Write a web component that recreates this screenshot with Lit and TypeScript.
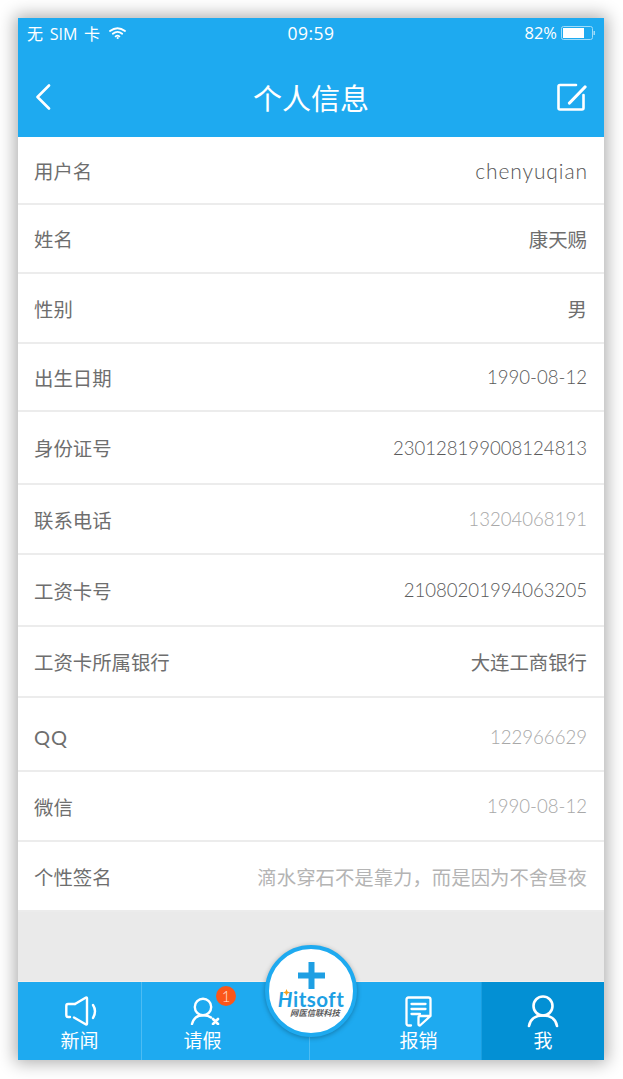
import { LitElement, html, css } from "lit";
import { customElement } from "lit/decorators.js";

type Row = { k: string; v: string; kind: "cjk" | "num" | "lat"; muted?: boolean; h: number };
const rows: Row[] = [
  { k: "用户名", v: "chenyuqian", kind: "lat", h: 68 },
  { k: "姓名", v: "康天赐", kind: "cjk", h: 69 },
  { k: "性别", v: "男", kind: "cjk", h: 70 },
  { k: "出生日期", v: "1990-08-12", kind: "num", h: 68 },
  { k: "身份证号", v: "230128199008124813", kind: "num", h: 73 },
  { k: "联系电话", v: "13204068191", kind: "num", muted: true, h: 70 },
  { k: "工资卡号", v: "21080201994063205", kind: "num", h: 72 },
  { k: "工资卡所属银行", v: "大连工商银行", kind: "cjk", h: 71 },
  { k: "QQ", v: "122966629", kind: "num", muted: true, h: 74 },
  { k: "微信", v: "1990-08-12", kind: "num", muted: true, h: 70 },
  { k: "个性签名", v: "滴水穿石不是靠力，而是因为不舍昼夜", kind: "cjk", muted: true, h: 70 },
];

@customElement("app-root")
export class AppRoot extends LitElement {
  static styles = css`
    :host { display: block; width: 623px; height: 1079px; background: #fff; overflow: hidden;
      font-family: Lato, "Noto Sans CJK SC", sans-serif; }
    .wrap { padding: 18px 19px 19px 18px; height: 1079px; box-sizing: border-box; }
    .phone { width: 586px; height: 1042px; background: #eaeaea; position: relative; display: flex; flex-direction: column;
      box-shadow: 0 0 16px 3px rgba(0,0,0,.32); }
    .status { height: 30px; box-sizing: border-box; background: #1eaaf0; color: #fff; display: grid; grid-template-columns: 1fr auto 1fr; align-items: center;
      padding: 0 9px 1px 9px; font-size: 16px; font-family: "Open Sans", "Noto Sans CJK SC", sans-serif; }
    .status .l { display: flex; align-items: center; gap: 9px; word-spacing: 2.5px; }
    .status .c { font-size: 17.5px; font-weight: 500; letter-spacing: .5px; }
    .status .r { display: flex; justify-content: flex-end; align-items: center; gap: 4px; font-size: 16.5px; }
    .nav { height: 89px; box-sizing: border-box; background: #1eaaf0; color: #fff; display: grid; grid-template-columns: 1fr auto 1fr;
      align-items: center; padding: 9px 17px 0 17px; }
    .nav .end { justify-self: end; }
    .title { font-size: 29px; font-family: "Noto Sans CJK SC", sans-serif; font-weight: 400; line-height: 40px; }
    .list { background: #fff; }
    .row { display: flex; align-items: center; justify-content: space-between; box-sizing: border-box; padding: 0 17px 0 16px;
      border-bottom: 2px solid #ececec; font-size: 19.4px; color: #6e6e6e; }
    .row.low { padding-top: 5px; }
    .k { font-family: "Noto Sans CJK SC", sans-serif; }
    .k.lat { font-family: Lato, sans-serif; font-size: 20px; letter-spacing: 1px; font-weight: 400; }
    .v { font-family: Lato, "Noto Sans CJK SC", sans-serif; color: #5a5a5a; }
    .v.num { font-size: 18.6px; font-weight: 300; }
    .v.lat { font-size: 21px; letter-spacing: .9px; margin-right: -.9px; font-weight: 300; color: #555; }
    .v.cjk { font-family: "Noto Sans CJK SC", sans-serif; color: #6e6e6e; }
    .v.m { color: #a8a8a8; }
    .v.cjk.m { color: #b4b4b4; }
    .spacer { flex: 1; }
    .tabs { height: 78px; background: #1eaaf0; display: flex; color: #fff; border-top: 1px solid #f3efec; margin-top: -1px; }
    .tab { display: flex; flex-direction: column; align-items: center; color: #fff; font-size: 19px; font-family: "Noto Sans CJK SC", sans-serif;
      line-height: 24px; padding-top: 12px; box-sizing: border-box; position: relative; }
    .ico { height: 34px; display: flex; align-items: center; justify-content: center; }
    .tab svg { display: block; }
    .t1 { width: 124px; border-right: 1px solid #4cbcf3; }
    .t2 { width: 167px; padding-right: 46px; }
    .t3 { width: 172px; border-left: 1px solid #4cbcf3; padding-left: 46px; }
    .t4 { flex: 1; background: #0390d4; border-left: 1px solid #1a9edf; }
    .shift-r { margin-left: 4px; }
    .shift-p { margin-left: 5px; }
    .badge { position: absolute; left: 74px; top: 4px; width: 20px; height: 20px; border-radius: 50%; background: #fb561a; color: #fbe3d8;
      font-size: 15px; line-height: 20px; text-align: center; font-family: Lato, sans-serif; font-weight: 300; }
    .fab { position: absolute; left: 247px; top: 927px; width: 92px; height: 92px; box-sizing: border-box; border-radius: 50%; background: #fff; border: 4px solid #1eaaf0;
      box-shadow: 0 1px 5px rgba(0,0,0,.3); display: flex; flex-direction: column; align-items: center; }
    .plus { display: block; margin-top: 13px; }
    .logo { font-family: Lato, sans-serif; font-weight: 700; font-size: 20.5px; line-height: 18px; color: #1e9fe3; margin-top: 1px; letter-spacing: .5px; white-space: nowrap; position: relative; }
    .logo em { font-style: italic; }
    .star { position: absolute; left: 5px; top: -1px; }
    .sub { font-family: "Noto Sans CJK SC", sans-serif; font-style: italic; font-size: 8.3px; line-height: 9px; color: #5c5c5c; font-weight: 700; white-space: nowrap; margin-left: 8px; }
  `;

  render() {
    return html`<div class="wrap"><div class="phone">
      <div class="status">
        <div class="l"><span>无 SIM 卡</span>
          <svg width="17" height="12" viewBox="0 0 17 12" fill="none" stroke="#fff" stroke-width="1.8" stroke-linecap="round">
            <path d="M1 4 Q8.5 -1.5 16 4"/><path d="M3.8 6.8 Q8.5 3 13.2 6.8"/><path d="M6.6 9.4 Q8.5 8 10.4 9.4"/><circle cx="8.5" cy="11" r=".6" fill="#fff" stroke-width="1"/>
          </svg></div>
        <div class="c">09:59</div>
        <div class="r"><span>82%</span>
          <svg width="34" height="14" viewBox="0 0 34 14"><rect x=".5" y=".5" width="31" height="13" rx="2" fill="none" stroke="#9fdcf9"/><rect x="2" y="2" width="21" height="10" fill="#fff"/><rect x="32.5" y="5" width="1.5" height="4" fill="#9fdcf9"/></svg>
        </div>
      </div>
      <div class="nav">
        <svg width="16" height="26" viewBox="0 0 16 26" fill="none" stroke="#fff" stroke-width="2.6" stroke-linecap="round" stroke-linejoin="round"><path d="M14 1.5 L2.5 13 L14 24.5"/></svg>
        <div class="title">个人信息</div>
        <svg class="end" width="30" height="28" viewBox="0 0 30 28" fill="none" stroke="#fff" stroke-width="2.6" stroke-linecap="round" stroke-linejoin="round"><path d="M19 2 H3 Q1.5 2 1.5 3.5 V25 Q1.5 26.5 3 26.5 H25 Q26.5 26.5 26.5 25 V12"/><path d="M12.5 20 L28 4" stroke-width="3.2"/></svg>
      </div>
      <div class="list">
        ${rows.map((r) => html`<div class="row ${r.k === "QQ" ? "low" : ""}" style="height:${r.h}px">
          <span class="k ${r.k === "QQ" ? "lat" : ""}">${r.k}</span><span class="v ${r.kind} ${r.muted ? "m" : ""}">${r.v}</span></div>`)}
      </div>
      <div class="spacer"></div>
      <div class="tabs">
        <div class="tab t1"><div class="ico shift-r"><svg width="33" height="30" viewBox="0 0 33 30" fill="none" stroke="#fff" stroke-width="2.4" stroke-linecap="round" stroke-linejoin="round"><path d="M10 8 H3 Q1.3 8 1.3 10 V19 Q1.3 21 3 21 H5"/><path d="M10 8 L21 1.5 Q22 1 22 2.5 V27.5 Q22 29 21 28.5 L9 21.5"/><path d="M28 9 Q32 15 28 22"/></svg></div>新闻</div>
        <div class="tab t2"><div class="ico shift-p"><svg width="30" height="28" viewBox="0 0 30 28" fill="none" stroke="#fff" stroke-width="2.4" stroke-linecap="round"><circle cx="13" cy="10" r="8.2"/><path d="M2 27 Q4 18.5 13 18.2 Q18 18 21 20.5"/><path d="M23 22 L28 27 M28 22 L23 27" stroke-width="2.6"/></svg></div>请假<span class="badge">1</span></div>
        <div class="tab t3"><div class="ico"><svg width="27" height="31" viewBox="0 0 27 31" fill="none" stroke="#fff" stroke-width="2.3" stroke-linecap="round" stroke-linejoin="round"><path d="M6 29.5 H3.5 Q1.5 29.5 1.5 27.5 V3.5 Q1.5 1.5 3.5 1.5 H23.5 Q25.5 1.5 25.5 3.5 V20 L15 29.5 Q13.5 29.5 13.5 28 V21.5 Q13.5 20 15 20 H25.5"/><path d="M6.5 8 H20.5 M6.5 13 H20.5 M6.5 18 H15"/></svg></div>报销</div>
        <div class="tab t4"><div class="ico"><svg width="32" height="33" viewBox="0 0 32 33" fill="none" stroke="#fff" stroke-width="2.6" stroke-linecap="round"><circle cx="16" cy="11" r="9.5"/><path d="M2 31 Q4 20.5 16 20.5 Q28 20.5 30 31"/></svg></div>我</div>
      </div>
      <div class="fab">
        <svg class="plus" width="27" height="27" viewBox="0 0 27 27"><path d="M10.5 0 H16.5 V10.5 H27 V16.5 H16.5 V27 H10.5 V16.5 H0 V10.5 H10.5 Z" fill="#1e9fe3"/></svg>
        <div class="logo"><em>H</em>itsoft
          <svg class="star" width="7" height="7" viewBox="0 0 7 7"><path d="M3.5 0 L4.5 2.5 L7 3.5 L4.5 4.5 L3.5 7 L2.5 4.5 L0 3.5 L2.5 2.5 Z" fill="#f8a11c"/></svg>
        </div>
        <div class="sub">网医信联科技</div>
      </div>
    </div></div>`;
  }
}
